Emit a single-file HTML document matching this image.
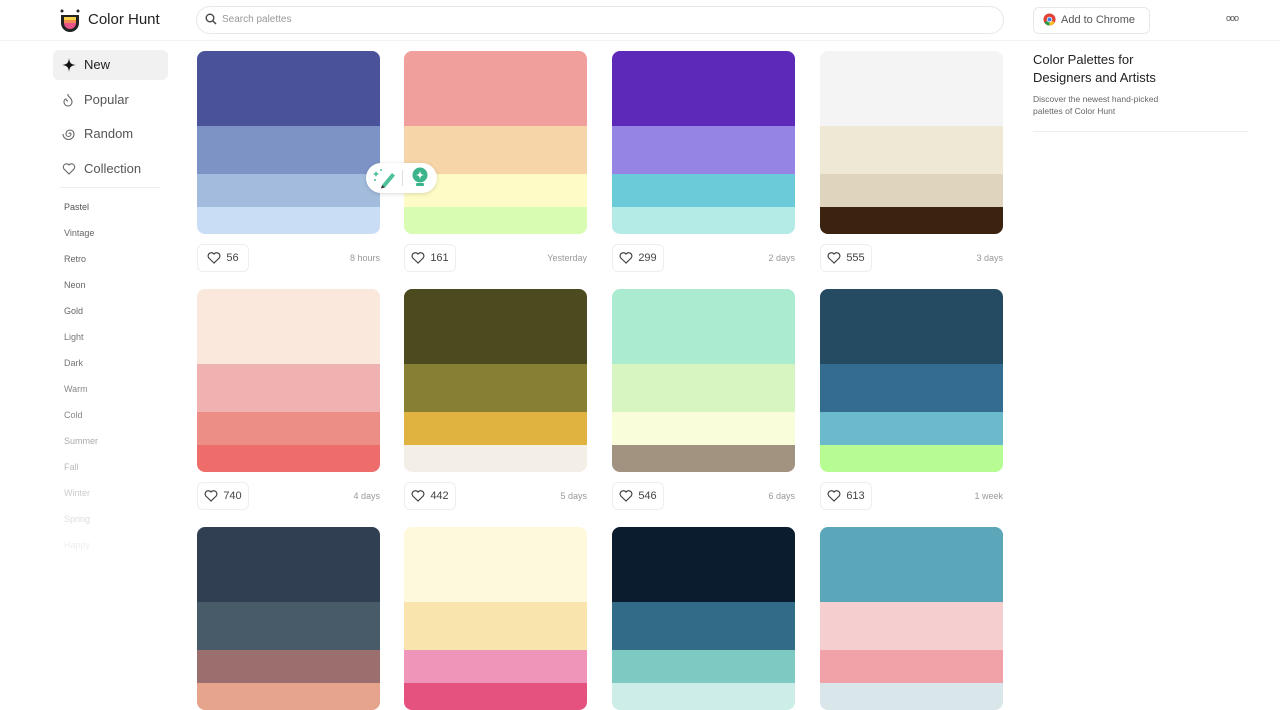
<!DOCTYPE html><html><head><style>
body{margin:0;width:1280px;height:685px;overflow:hidden;background:#fff;font-family:"Liberation Sans",sans-serif;position:relative;color:#222}
.a{position:absolute}
.card{position:absolute;width:183px;border-radius:8px;overflow:hidden}
.card div{width:100%}
.like{position:absolute;width:50px;height:26px;border:1px solid #eee;border-radius:6px;font-size:11px;color:#444;display:flex;align-items:center;justify-content:center;gap:5px}
.t{position:absolute;font-size:9px;color:#999;text-align:right;width:80px}
.nav{position:absolute;left:62px;font-size:13px;color:#555;display:flex;align-items:center;gap:8px}
.tag{position:absolute;left:64px;font-size:9px}
</style></head><body>
<div class="a" style="left:0;top:40px;width:1280px;height:1px;background:#f2f2f2"></div>
<svg class="a" style="left:59px;top:8px" width="22" height="24" viewBox="0 0 22 24"><circle cx="3" cy="3" r="1.5" fill="#222"/><circle cx="19" cy="3" r="1.5" fill="#222"/><path d="M2 7h18v8a9 9 0 0 1-18 0z" fill="#222"/><path d="M5 9h12v3H5z" fill="#f6d24a"/><path d="M5 12h12v3H5z" fill="#f28b50"/><path d="M5 15h12a6 6 0 0 1-12 0z" fill="#e9548a"/></svg>
<div class="a" style="left:88px;top:11px;font-size:15px;color:#222">Color Hunt</div>
<div class="a" style="left:196px;top:6px;width:806px;height:26px;border:1px solid #e8e8e8;border-radius:14px"></div>
<svg class="a" style="left:205px;top:13px" width="12" height="12" viewBox="0 0 12 12"><circle cx="5" cy="5" r="3.8" stroke="#444" stroke-width="1.4" fill="none"/><path d="M8 8l3 3" stroke="#444" stroke-width="1.4"/></svg>
<div class="a" style="left:222px;top:14px;font-size:10px;color:#999">Search palettes</div>
<div class="a" style="left:1033px;top:7px;width:115px;height:25px;border:1px solid #e8e8e8;border-radius:6px"></div>
<svg class="a" style="left:1043px;top:13px" width="13" height="13" viewBox="0 0 14 14"><circle cx="7" cy="7" r="6.5" fill="#e34133"/><path d="M7 7L1.5 10A6.5 6.5 0 0 0 7 13.5z" fill="#2c9e4b"/><path d="M7 7l5.5 3A6.5 6.5 0 0 1 7 13.5z" fill="#f6c026"/><circle cx="7" cy="7" r="3" fill="#fff"/><circle cx="7" cy="7" r="2.2" fill="#3c7fe6"/></svg>
<div class="a" style="left:1061px;top:14px;font-size:11px;color:#555">Add to Chrome</div>
<div class="a" style="left:1226px;top:13px;font-size:9px;color:#555;letter-spacing:-1px">ooo</div>
<div class="a" style="left:53px;top:50px;width:115px;height:30px;background:#f1f1f1;border-radius:6px"></div>
<div class="nav" style="top:57px;color:#222"><svg width="14" height="14" viewBox="0 0 14 14"><path d="M7 0C7.5 5 9 6.5 14 7 9 7.5 7.5 9 7 14 6.5 9 5 7.5 0 7 5 6.5 6.5 5 7 0z" fill="#111"/></svg>New</div>
<div class="nav" style="top:92px"><svg width="14" height="14" viewBox="0 0 14 14"><path d="M6 1c-1 3 4 3 4 8a4 4 0 0 1-8 0c0-2 1-3 2-3 0 1 1 2 2 2" stroke="#666" fill="none" stroke-width="1.1"/></svg>Popular</div>
<div class="nav" style="top:126px"><svg width="14" height="14" viewBox="0 0 14 14"><path d="M7 7a1 1 0 1 1 2 0 2.5 2.5 0 0 1-5 0A4 4 0 0 1 12 7a5.5 5.5 0 0 1-11 0" stroke="#666" fill="none" stroke-width="1.1"/></svg>Random</div>
<div class="nav" style="top:161px"><svg width="14" height="14" viewBox="0 0 14 14"><path d="M7 12L2 7a3 3 0 0 1 5-4 3 3 0 0 1 5 4z" stroke="#666" fill="none" stroke-width="1.1"/></svg>Collection</div>
<div class="a" style="left:60px;top:187px;width:100px;height:1px;background:#eee"></div>
<div class="tag" style="top:202px;color:#555">Pastel</div>
<div class="tag" style="top:228px;color:#666">Vintage</div>
<div class="tag" style="top:254px;color:#666">Retro</div>
<div class="tag" style="top:280px;color:#666">Neon</div>
<div class="tag" style="top:306px;color:#666">Gold</div>
<div class="tag" style="top:332px;color:#777">Light</div>
<div class="tag" style="top:358px;color:#777">Dark</div>
<div class="tag" style="top:384px;color:#888">Warm</div>
<div class="tag" style="top:410px;color:#888">Cold</div>
<div class="tag" style="top:436px;color:#aaa">Summer</div>
<div class="tag" style="top:462px;color:#bbb">Fall</div>
<div class="tag" style="top:488px;color:#ccc">Winter</div>
<div class="tag" style="top:514px;color:#ddd">Spring</div>
<div class="tag" style="top:540px;color:#eee">Happy</div>
<div class="a" style="left:1033px;top:51px;font-size:13px;line-height:18px;color:#222">Color Palettes for<br>Designers and Artists</div>
<div class="a" style="left:1033px;top:93px;font-size:8.5px;line-height:12px;color:#666">Discover the newest hand-picked<br>palettes of Color Hunt</div>
<div class="a" style="left:1033px;top:131px;width:215px;height:1px;background:#eee"></div>
<div id="g"></div>
<script>
var P=[["#4a529a","#7d93c5","#a3bcdd","#c9ddf5"],["#f09f9c","#f6d6a8","#fefbc6","#d7fcb2"],["#5d29b8","#9584e3","#6ccbd9","#b5ebe6"],["#f4f4f4","#efe8d4","#dfd5bf","#3b2310"],
["#fae8dd","#f0b1b1","#ed8e86","#ee6d6a"],["#4c4b20","#867f34","#e0b23f","#f4efe6"],["#abebd0","#d6f5c1","#fafdd9","#a29280"],["#254b62","#336b91","#6bbacc","#b7fc93"],
["#303f52","#475b69","#9b6f6e","#e6a48c"],["#fef8dd","#f9e4ae","#ef95b9","#e6527f"],["#0b1c2e","#326b88","#7ecac3","#cdeee8"],["#5ba6b8","#f5cfcf","#f0a2a8","#d9e6ea"]];
var L=["56","161","299","555","740","442","546","613"],T=["8 hours","Yesterday","2 days","3 days","4 days","5 days","6 days","1 week"];
var X=[197,404,612,820],Y=[51,289,527],h=[75,48,33,27],s="";
var heart='<svg width="14" height="12" viewBox="0 0 14 12"><path d="M7 11L1.8 6A3 3 0 0 1 7 2a3 3 0 0 1 5.2 4z" stroke="#444" fill="none" stroke-width="1.2"/></svg>';
P.forEach(function(p,i){var x=X[i%4],y=Y[Math.floor(i/4)];s+='<div class="card" style="left:'+x+'px;top:'+y+'px">';p.forEach(function(c,j){s+='<div style="height:'+h[j]+'px;background:'+c+'"></div>'});s+='</div>';
if(i<8){s+='<div class="like" style="left:'+x+'px;top:'+(y+193)+'px">'+heart+L[i]+'</div><div class="t" style="left:'+(x+103)+'px;top:'+(y+202)+'px">'+T[i]+'</div>'}});
document.getElementById("g").innerHTML=s;
</script>
<div class="a" style="left:366px;top:163px;width:71px;height:30px;background:#fff;border-radius:15px;box-shadow:0 1px 4px rgba(0,0,0,.15)"></div>
<svg class="a" style="left:372px;top:167px" width="24" height="22" viewBox="0 0 24 22"><path d="M10 18l10-12 3 2.5-10 12z" fill="#4dbf9a"/><path d="M10 18l3 2.5-4 1z" fill="#333"/><path d="M4 4l1 2 2 1-2 1-1 2-1-2-2-1 2-1z" fill="#4dbf9a"/><circle cx="9" cy="3" r="1" fill="#4dbf9a"/><circle cx="3" cy="13" r="1" fill="#4dbf9a"/></svg>
<div class="a" style="left:402px;top:170px;width:1px;height:16px;background:#ddd"></div>
<svg class="a" style="left:411px;top:167px" width="18" height="22" viewBox="0 0 18 22"><circle cx="9" cy="8" r="7.5" fill="#3bb48c"/><path d="M9 3.5C9.4 6.8 10.2 7.6 13.5 8 10.2 8.4 9.4 9.2 9 12.5 8.6 9.2 7.8 8.4 4.5 8 7.8 7.6 8.6 6.8 9 3.5z" fill="#fff"/><rect x="5" y="16" width="8" height="3" rx="1" fill="#3bb48c"/></svg>
</body></html>
